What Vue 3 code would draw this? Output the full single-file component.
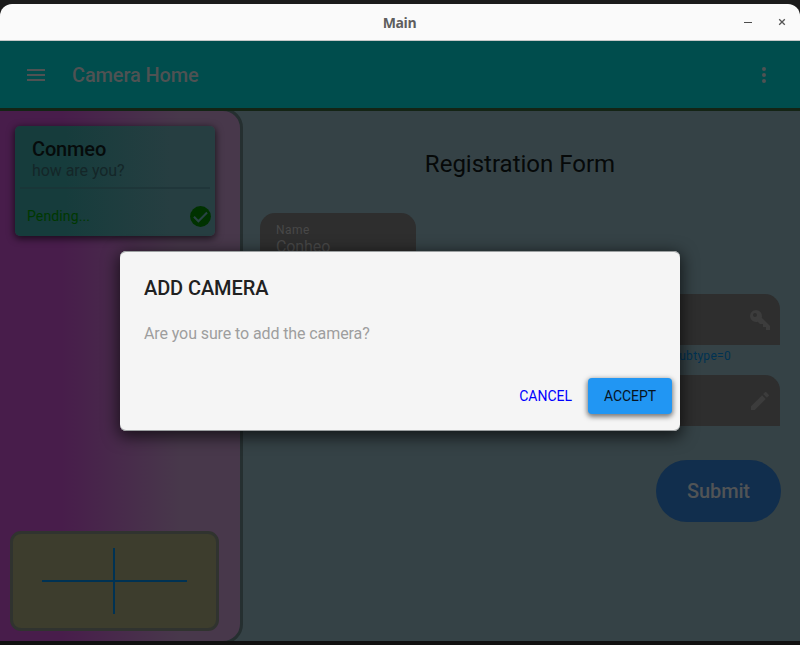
<script setup>
import { ref } from 'vue'

const name = ref('Conheo')
const dialogOpen = ref(true)
</script>

<template>
  <div class="screen">
    <div class="window">
      <header class="titlebar">
        <span class="title">Main</span>
        <svg class="win-controls" width="44" height="12" viewBox="0 0 44 12">
          <path d="M1 6.5H9" stroke="#4c4c4c" stroke-width="1" />
          <path d="M36.2 3.2L41.8 8.8M41.8 3.2L36.2 8.8" stroke="#555" stroke-width="1.3" />
        </svg>
      </header>

      <div class="toolbar">
        <svg class="menu" width="24" height="24" viewBox="0 0 24 24">
          <path d="M3 6h18v2H3V6m0 5h18v2H3v-2m0 5h18v2H3v-2z" />
        </svg>
        <span class="app-title">Camera Home</span>
        <svg class="more" width="24" height="24" viewBox="0 0 24 24">
          <path d="M12 16a2 2 0 1 1 0 4 2 2 0 0 1 0-4m0-6a2 2 0 1 1 0 4 2 2 0 0 1 0-4m0-6a2 2 0 1 1 0 4 2 2 0 0 1 0-4z" />
        </svg>
      </div>

      <main class="body">
        <aside class="sidebar">
          <section class="card">
            <div class="card-name">Conmeo</div>
            <div class="card-sub">how are you?</div>
            <div class="rule"></div>
            <div class="card-status">
              <span>Pending...</span>
              <svg width="25" height="25" viewBox="0 0 24 24">
                <circle cx="12" cy="12" r="10" fill="#003200" />
                <path d="M5.7 12.2L10 16.5L18.3 8.2" fill="none" stroke="#294345" stroke-width="2" />
              </svg>
            </div>
          </section>
          <button class="add">
            <svg width="146" height="66" viewBox="0 0 146 66">
              <path d="M0 33H145M72 0V66" stroke="#003253" stroke-width="2" />
            </svg>
          </button>
        </aside>

        <section class="form">
          <h1>Registration Form</h1>
          <div class="field name-field">
            <label>Name</label>
            <span>{{ name }}</span>
          </div>
          <div class="field wide first">
            <svg width="24" height="24" viewBox="0 0 24 24">
              <path d="M22 18v4h-4v-3h-3v-3h-3l-2.26-2.26C9.19 13.91 8.61 14 8 14A6 6 0 1 1 14 8c0 .61-.09 1.19-.26 1.74L22 18M7 5a2 2 0 1 0 0 4 2 2 0 0 0 0-4z" />
            </svg>
          </div>
          <div class="hint">subtype=0</div>
          <div class="field wide">
            <svg width="24" height="24" viewBox="0 0 24 24">
              <path d="M20.71 7.04c.39-.39.39-1.04 0-1.41l-2.34-2.34c-.37-.39-1.02-.39-1.41 0l-1.84 1.83 3.75 3.75M3 17.25V21h3.75L17.81 9.93l-3.75-3.75L3 17.25z" />
            </svg>
          </div>
          <button class="submit">Submit</button>
        </section>
      </main>

      <div v-if="dialogOpen" class="dialog" role="dialog">
        <h2>ADD CAMERA</h2>
        <p>Are you sure to add the camera?</p>
        <div class="actions">
          <button class="cancel" @click="dialogOpen = false">CANCEL</button>
          <button class="accept" @click="dialogOpen = false">ACCEPT</button>
        </div>
      </div>
    </div>
  </div>
</template>

<style>
body { margin: 0; background: #1b1b1b; overflow: hidden; }
</style>

<style scoped>
* { box-sizing: border-box; }
button { border: 0; padding: 0; background: none; font: inherit; }
h1, h2, p { margin: 0; font-weight: 400; }
svg { display: block; flex: none; }

.screen {
  width: 800px;
  height: 645px;
  padding: 4px 0;
  background: linear-gradient(#1b1b1b 50%, #111 50%);
  font-family: Roboto, sans-serif;
}
.window { position: relative; height: 637px; display: flex; flex-direction: column; }

.titlebar {
  height: 37px;
  flex: none;
  display: grid;
  grid-template-columns: 1fr auto 1fr;
  align-items: center;
  padding: 1px 13px 0;
  background: #fafafa;
  border-bottom: 1px solid #c6c8c8;
  border-radius: 12px 12px 0 0;
}
.title {
  grid-column: 2;
  font: 700 14px/20px "Open Sans", "Noto Sans", sans-serif;
  letter-spacing: -0.35px;
  margin-right: 1px;
  color: #5e5e5e;
}
.win-controls { justify-self: end; margin-top: -1px; }

.toolbar {
  height: 70px;
  flex: none;
  display: flex;
  align-items: center;
  padding: 0 24px;
  background: #004d4d;
  border-bottom: 3px solid #142415;
  color: #4f5253;
}
.toolbar svg { fill: #4f5253; }
.app-title { margin-left: 24px; font-size: 20px; font-weight: 500; letter-spacing: -0.13px; }
.more { margin-left: auto; }

.body { flex: 1; display: flex; background: #354246; overflow: hidden; }

.sidebar {
  width: 246px;
  flex: none;
  display: flex;
  flex-direction: column;
  justify-content: space-between;
  margin: -3px 0 -3px -3px;
  padding: 15px 0 10px 10px;
  border: 3px solid #252f30;
  border-radius: 0 20px 20px 0;
  background: linear-gradient(90deg, #481d4b 0, #481d4b 62px, #48384b 180px);
}
.card {
  width: 200px;
  height: 110px;
  margin-left: 5px;
  display: flex;
  flex-direction: column;
  border-radius: 5px;
  background: linear-gradient(90deg, #163c3c 0, #163c3c 50px, #263e41 155px);
  box-shadow: 0 2px 7px 1px rgba(0, 0, 0, 0.6);
}
.card-name { padding: 11px 17px 0; font-size: 20px; line-height: 24px; font-weight: 500; letter-spacing: -0.15px; color: #060b0b; }
.card-sub { padding: 0 17px; font-size: 16px; line-height: 19px; letter-spacing: -0.06px; color: #142628; }
.rule { height: 2px; margin: 7px 5px 0; background: rgba(28, 50, 54, 0.6); }
.card-status {
  display: flex;
  align-items: center;
  justify-content: space-between;
  padding: 15px 2px 0 12px;
  font-size: 14px;
  letter-spacing: 0.12px;
  color: #003800;
}
.card-status span { margin-top: -2px; }
.add {
  width: 209px;
  height: 100px;
  display: flex;
  align-items: center;
  justify-content: center;
  border: 3px solid #30332f;
  border-radius: 11px;
  background: #3d3d2d;
}

.form {
  flex: 1;
  display: flex;
  flex-direction: column;
  align-items: flex-end;
  padding: 38px 20px 0 17px;
}
h1 { align-self: center; font-size: 24px; line-height: 30px; color: #060909; }
.field { background: #2e2e2e; }
.name-field {
  align-self: flex-start;
  width: 156px;
  height: 51px;
  display: flex;
  flex-direction: column;
  margin-top: 34px;
  padding: 10px 16px 0;
  border-radius: 15px 15px 0 0;
  color: #484848;
}
.name-field label { font-size: 12px; line-height: 15px; letter-spacing: 0.45px; }
.name-field span { font-size: 16px; line-height: 18px; letter-spacing: -0.1px; }
.wide {
  width: 520px;
  height: 51px;
  display: flex;
  align-items: center;
  justify-content: flex-end;
  padding-right: 8px;
  border-radius: 15px 15px 0 0;
}
.wide svg { fill: #3c3c3c; }
.first { margin-top: 30px; }
.hint { height: 30px; padding: 3px 49px 0 0; font-size: 12px; line-height: 16px; letter-spacing: 0.3px; color: #003253; }
.submit {
  width: 125px;
  height: 62px;
  margin-top: 34px;
  margin-right: -1px;
  padding-bottom: 1px;
  border-radius: 31px;
  background: #112e4d;
  font-size: 20px;
  font-weight: 500;
  letter-spacing: -0.15px;
  color: #515456;
}

.dialog {
  position: absolute;
  left: 120px;
  top: 247px;
  width: 560px;
  height: 180px;
  display: flex;
  flex-direction: column;
  padding: 24px 8px 17px 24px;
  border-radius: 6px;
  background: #f5f5f5;
  box-shadow: inset 0 1px #9b9fa0, inset 0 -1px #9b9fa0, 0 4px 16px 2px rgba(0, 0, 0, 0.65);
}
h2 { font-size: 20px; line-height: 26px; font-weight: 500; letter-spacing: -0.1px; color: #212121; }
p { margin-top: 23px; font-size: 16px; line-height: 20px; letter-spacing: -0.1px; color: #9e9e9e; }
.actions { display: flex; justify-content: flex-end; gap: 16px; margin-top: auto; font-size: 14px; }
.cancel { color: #0000ff; }
.accept {
  width: 84px;
  height: 36px;
  border-radius: 4px;
  background: #2196f3;
  color: #07131e;
  letter-spacing: -0.08px;
  box-shadow: 0 2px 5px 1px rgba(0, 0, 0, 0.5);
}
</style>
